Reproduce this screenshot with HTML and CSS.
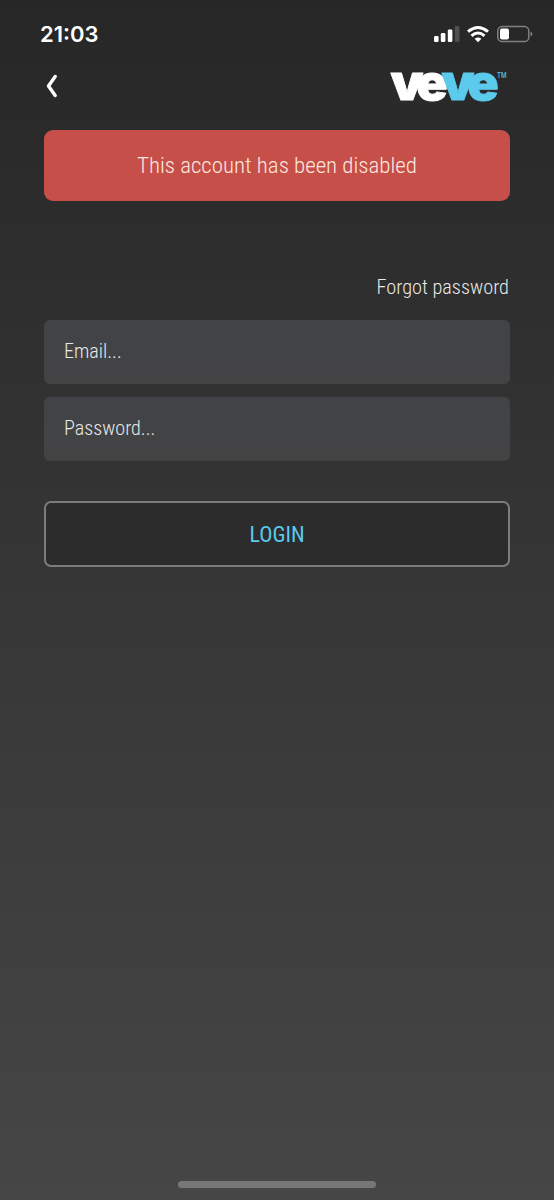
FILE: index.html
```html
<!DOCTYPE html>
<html lang="en">
<head>
<meta charset="utf-8">
<title>VeVe login</title>
<link rel="stylesheet" href="styles.css">
</head>
<body>
<div class="screen">
  <div class="status">
    <span class="time">21:03</span>
    <svg class="indicators" width="100" height="20" viewBox="0 0 100 20">
      <g fill="#fff">
        <rect x="1" y="12" width="4.6" height="6" rx="1.2"/>
        <rect x="7.8" y="9" width="4.6" height="9" rx="1.2"/>
        <rect x="14.8" y="5.5" width="4.6" height="12.5" rx="1.2"/>
        <rect x="21.8" y="2" width="4.6" height="16" rx="1.2" fill="#505050"/>
        <path d="M45 18.2L41.6 14.8Q45 12 48.4 14.8Z"/>
      </g>
      <g fill="none" stroke="#fff" stroke-width="3.1">
        <path d="M35 7.6Q45 -0.6 55 7.6"/>
        <path d="M38.5 11.8Q45 6.2 51.5 11.8"/>
      </g>
      <rect x="64.8" y="2.4" width="31" height="15.2" rx="4.4" fill="none" stroke="#808080" stroke-width="1.5"/>
      <rect x="67" y="4.6" width="9" height="10.8" rx="2" fill="#fff"/>
      <path d="M97.5 7.5Q101.5 10 97.5 12.5Z" fill="#808080"/>
    </svg>
  </div>
  <div class="header">
    <svg class="back" width="16" height="26" viewBox="0 0 16 26"><path d="M11.2 3.5L4.5 13L11.2 22.5" fill="none" stroke="#fff" stroke-width="3.4" stroke-linecap="round" stroke-linejoin="round"/></svg>
    <svg class="logo" width="122" height="42" viewBox="0 0 122 42">
      <text class="mark" transform="translate(1.5 30.5) scale(1.06 1)">ve<tspan class="blue">ve</tspan></text>
      <text class="tm" x="108" y="8.5" textLength="9.5" lengthAdjust="spacingAndGlyphs">TM</text>
    </svg>
  </div>
  <div class="alert">This account has been disabled</div>
  <div class="forgot">Forgot password</div>
  <div class="field">Email...</div>
  <div class="field">Password...</div>
  <div class="login">LOGIN</div>
  <div class="home"></div>
</div>
</body>
</html>
```
FILE: styles.css
```css
* { box-sizing: border-box; }
body { margin: 0; }
.screen {
  display: flex;
  flex-direction: column;
  height: 1200px;
  padding: 0 44px 12px;
  background: linear-gradient(#272727, #464646);
  color: #e8e8e8;
  font-family: "Roboto Condensed", Roboto, sans-serif;
  font-stretch: 75%;
  font-weight: 300;
}
.status {
  display: flex;
  justify-content: space-between;
  height: 64px;
  margin: 0 -23px 0 -4px;
  padding-top: 20px;
}
.time { font: 600 22px/28px Inter, sans-serif; color: #fff; }
.indicators { margin-top: 4px; }
.header {
  display: flex;
  justify-content: space-between;
  height: 66px;
  padding-top: 5px;
}
.back { margin-top: 4px; }
.logo { margin-right: -1px; overflow: visible; }
.mark { font: 900 49px Inter, sans-serif; letter-spacing: -5.9px; fill: #fff; stroke: #fff; stroke-width: 0.8px; stroke-linejoin: round; }
.blue { fill: #5bcaed; stroke: #5bcaed; }
.tm { font: 500 8px Inter, sans-serif; fill: #5bcaed; }
.alert {
  height: 71px;
  border-radius: 9px;
  background: #c64f49;
  color: #ffe8df;
  font-size: 22.9px;
  line-height: 72px;
  text-align: center;
}
.forgot {
  height: 119px;
  padding: 72px 1px 0 0;
  font-size: 20.3px;
  line-height: 28px;
  text-align: right;
}
.field {
  height: 64px;
  margin-bottom: 12.5px;
  padding-left: 20px;
  border-radius: 6px;
  background: linear-gradient(#414347, #434344);
  font-size: 20.1px;
  line-height: 63px;
}
.login {
  height: 66px;
  margin-top: 28px;
  border: 2px solid #7c7c7c;
  border-radius: 7px;
  background: #2c2c2c;
  color: #5bcaed;
  font-size: 22px;
  font-weight: 400;
  line-height: 64px;
  text-align: center;
}
.home {
  width: 198px;
  height: 7px;
  margin: auto auto 0;
  border-radius: 4px;
  background: #777;
}
```
